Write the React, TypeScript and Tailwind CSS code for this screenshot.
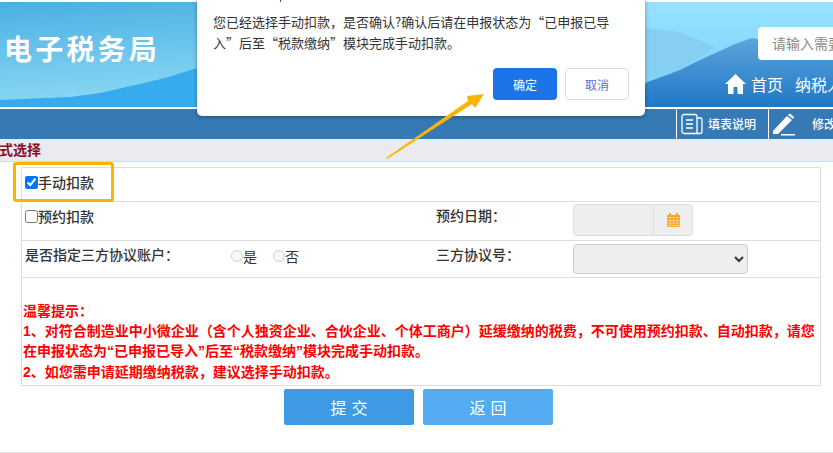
import React from "react";

function BannerArt() {
  return (
    <svg className="absolute inset-0 h-full w-full" viewBox="0 0 833 105" preserveAspectRatio="none">
      <defs>
        <linearGradient id="left" x1="0" y1="0" x2="0.55" y2="1">
          <stop offset="0" stopColor="#4aafe4" />
          <stop offset="0.55" stopColor="#78ccef" />
          <stop offset="1" stopColor="#9ae4f8" />
        </linearGradient>
        <linearGradient id="right" x1="0" y1="0" x2="0" y2="1">
          <stop offset="0" stopColor="#97e2ff" />
          <stop offset="1" stopColor="#74d0fa" />
        </linearGradient>
        <linearGradient id="mount" x1="0" y1="0" x2="0" y2="1">
          <stop offset="0" stopColor="#5ca4dc" />
          <stop offset="1" stopColor="#1f78c6" />
        </linearGradient>
      </defs>
      <rect width="833" height="105" fill="url(#left)" />
      <rect x="640" width="193" height="105" fill="url(#right)" />
      <path d="M0 98 L70 95 L100 91 L135 83 L165 76 L197 66 L197 105 L0 105Z" fill="#36acef" />
      <path d="M645 26 L680 30 L715 45 L680 68 L645 76Z" fill="#86cff2" />
      <path d="M645 81 L680 68 L700 58 L735 42 L752 36 L772 40 L800 44 L833 52 L833 105 L645 105Z" fill="url(#mount)" />
    </svg>
  );
}

function Toolbar() {
  return (
    <div className="flex h-[30px] overflow-hidden bg-[#3579b5]">
      <div className="flex w-[833px] shrink-0 pl-[676px]">
        <div className="flex w-[93px] shrink-0 items-center gap-[5px] border-x border-white pl-[3px]">
          <svg width="23" height="22" viewBox="0 0 23 22" fill="none" stroke="#fff" strokeWidth="1.3">
            <path d="M2 3.5 a2 2 0 0 1 2-2 h11 a2 2 0 0 1 2 2 v17 H4 a2 2 0 0 1-2-2Z" />
            <path d="M17 5 h3.5 a1.5 1.5 0 0 1 1.5 1.5 v12 a2 2 0 0 1-2 2 h-3" />
            <path d="M6 7 h7 M6 11 h7 M6 15 h7" />
          </svg>
          <span className="text-[12px] font-medium whitespace-nowrap text-white">填表说明</span>
        </div>
        <div className="flex shrink-0 items-center pl-[3px]">
          <svg width="23" height="23" viewBox="0 0 23 23" fill="#fff">
            <path d="M1 18 L15 3 L20 7 L6 21 H1Z" />
            <path d="M16 2 L18 0.5 L22 4 L21 6Z" />
            <rect x="9" y="21" width="14" height="1.5" />
          </svg>
          <span className="ml-[17px] text-[12px] font-medium whitespace-nowrap text-white">修改</span>
        </div>
      </div>
    </div>
  );
}

function Row({ className, children }: { className: string; children: React.ReactNode }) {
  return <div className={`flex items-center border-b border-[#dddddd] ${className}`}>{children}</div>;
}

export default function App() {
  return (
    <div className="relative h-[453px] w-[833px] overflow-hidden bg-white font-['Noto_Sans_CJK_SC','Liberation_Sans',sans-serif]">
      <div className="pt-[2px]">
        <div className="relative h-[105px] overflow-hidden">
          <BannerArt />
          <div className="relative flex h-full">
            <div className="ml-[4px] mt-[28px] text-[28px] leading-[36px] font-bold tracking-[3.2px] whitespace-nowrap text-white">
              电子税务局
            </div>
            <div className="mt-[25px] ml-auto flex h-[33px] w-[75px] items-center overflow-hidden rounded-l-[4px] bg-white pl-[14px] text-[14px] whitespace-nowrap text-[#8a8a8a]">
              <span>请输入需要</span>
            </div>
          </div>
          <div className="absolute top-[70px] left-[725px] flex w-[108px] items-center gap-[5px] overflow-hidden whitespace-nowrap text-[16px] text-white">
            <svg className="shrink-0" width="21" height="20" viewBox="0 0 21 20" fill="#fff">
              <path d="M10.5 0 L21 10 H18 V20 H12.5 V13 H8.5 V20 H3 V10 H0Z" />
            </svg>
            <span className="shrink-0">首页</span>
            <span className="ml-[7px] shrink-0">纳税人</span>
          </div>
        </div>
      </div>
      <div className="h-[2px] bg-white" />
      <Toolbar />
      <div className="h-[23px] border-b border-[#c9dcf3] bg-[#e9ebee]">
        <div className="ml-[-15px] text-[14px] leading-[20px] font-bold text-[#8f0a24]">方式选择</div>
      </div>

      <div className="mx-[21px] mt-[5px] w-[800px] border border-[#dddddd] text-[14px] font-medium text-[#333333]">
        <Row className="h-[34px] pb-[5px]">
          <label className="ml-[3px] flex items-center">
            <input type="checkbox" checked readOnly className="m-0 h-[13px] w-[13px]" />
            <span>手动扣款</span>
          </label>
        </Row>
        <Row className="h-[39px]">
          <label className="mb-[10px] ml-[3px] flex w-[411px] items-center">
            <input type="checkbox" readOnly className="m-0 h-[13px] w-[13px]" />
            <span>预约扣款</span>
          </label>
          <div className="mb-[12px] w-[137px]">预约日期：</div>
          <div className="mb-[3px] flex h-[32px] w-[120px] overflow-hidden rounded-[4px] border border-[#dddddd] bg-[#eeeeee]">
            <div className="w-[80px] border-r border-[#dddddd]" />
            <div className="flex flex-1 items-center justify-center">
              <svg width="13" height="14" viewBox="0 0 13 14">
                <path d="M0 2 H2 V0 H4 V2 H9 V0 H11 V2 H13 V4.5 H0Z" fill="#f8a427" />
                <rect y="5" width="13" height="9" fill="#f8a427" />
                <path d="M0 7.5 H13 M0 10 H13 M0 12.5 H13 M3 5 V14 M6.5 5 V14 M10 5 V14" stroke="#fff" strokeWidth="0.6" opacity="0.7" />
              </svg>
            </div>
          </div>
        </Row>
        <Row className="h-[37px]">
          <div className="mb-[10px] ml-[3px] w-[206px]">是否指定三方协议账户：</div>
          <label className="mb-[6px] flex items-center font-normal">
            <input type="radio" disabled className="m-0 h-[12px] w-[12px]" />
            <span>是</span>
          </label>
          <label className="mb-[6px] ml-[16px] flex w-[163px] items-center font-normal">
            <input type="radio" disabled className="m-0 h-[12px] w-[12px]" />
            <span>否</span>
          </label>
          <div className="mb-[10px] w-[137px]">三方协议号：</div>
          <select disabled className="h-[30px] w-[175px] rounded-[4px] border border-[#cccccc] bg-[#eeeeee]" />
        </Row>
        <div className="h-[107px] pt-[23px] pl-[1px] font-['Liberation_Sans','Noto_Sans_CJK_SC',sans-serif] text-[14px] leading-[20.2px] font-bold text-[#ff0000]">
          <div>温馨提示：</div>
          <div className="w-[796px]">
            1、对符合制造业中小微企业（含个人独资企业、合伙企业、个体工商户）延缓缴纳的税费，不可使用预约扣款、自动扣款，请您在申报状态为“已申报已导入”后至“税款缴纳”模块完成手动扣款。
          </div>
          <div>2、如您需申请延期缴纳税款，建议选择手动扣款。</div>
        </div>
      </div>

      <div className="mt-[3px] ml-[284px] flex gap-[9px]">
        <button className="h-[36px] w-[130px] rounded-[2px] bg-[#3f9ae5] pl-[5px] text-[16px] tracking-[5px] text-white">提交</button>
        <button className="h-[36px] w-[130px] rounded-[2px] bg-[#55abf2] pl-[5px] text-[16px] tracking-[5px] text-white">返回</button>
      </div>

      <div className="absolute right-0 bottom-0 left-0 h-px bg-[#e5e5e5]" />

      <div className="absolute top-[-10px] left-[197px] h-[126px] w-[448px] rounded-[5px] bg-white pt-[21px] pl-[16px] text-[13px] leading-[21px] text-[#333333] shadow-[0_1px_4px_rgba(0,0,0,0.35)]">
        <div className="absolute top-[10px] left-[83px] h-[2px] w-px bg-[#8f3a3a]" />
        <div className="w-[400px]">
          您已经选择手动扣款，是否确认?确认后请在申报状态为“已申报已导入”后至“税款缴纳”模块完成手动扣款。
        </div>
        <div className="absolute right-[16px] bottom-[16px] flex gap-[8px] text-[12px]">
          <button className="h-[32px] w-[64px] rounded-[4px] bg-[#1c74e9] text-white">确定</button>
          <button className="h-[32px] w-[64px] rounded-[4px] border border-[#dddddd] bg-white text-[#5a6ed2]">取消</button>
        </div>
      </div>

      <svg className="absolute top-[90px] left-[380px]" width="110" height="72" viewBox="0 0 110 72">
        <path d="M6 68 L88 11 L87 6 L104 4 L95 18 L92 14 L7 69Z" fill="#fdb400" />
      </svg>

      <div className="absolute top-[162px] left-[13px] h-[40px] w-[101px] rounded-[3px] border-[3px] border-[#fdb400]" />
    </div>
  );
}
